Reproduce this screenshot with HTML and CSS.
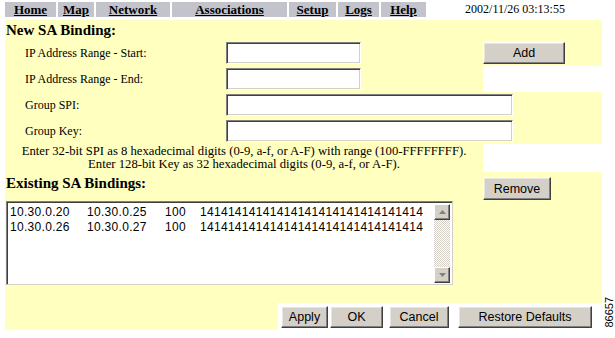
FILE: index.html
```html
<!DOCTYPE html>
<html>
<head>
<meta charset="utf-8">
<link rel="stylesheet" href="styles.css">
</head>
<body>
<div class="nav">
  <a class="tab tab-home">Home</a>
  <a class="tab tab-map">Map</a>
  <a class="tab tab-network">Network</a>
  <a class="tab tab-assoc">Associations</a>
  <a class="tab tab-setup">Setup</a>
  <a class="tab tab-logs">Logs</a>
  <a class="tab tab-help">Help</a>
  <span class="date">2002/11/26 03:13:55</span>
</div>
<div class="page">
  <div class="panel">
    <div class="row head"><h2 class="title">New SA Binding:</h2></div>
    <div class="row field">
      <span class="lbl">IP Address Range - Start:</span>
      <span class="cell"><input class="input short" type="text"></span>
      <span class="cell"><button class="btn btn-add">Add</button></span>
    </div>
    <div class="row field">
      <span class="lbl">IP Address Range - End:</span>
      <span class="cell"><input class="input short" type="text"></span>
      <span class="blank"></span>
    </div>
    <div class="row field">
      <span class="lbl">Group SPI:</span>
      <span class="cell wide"><input class="input long" type="text"></span>
    </div>
    <div class="row field">
      <span class="lbl">Group Key:</span>
      <span class="cell wide"><input class="input long" type="text"></span>
    </div>
    <div class="row hint">
      <p class="hint-text">Enter 32-bit SPI as 8 hexadecimal digits (0-9, a-f, or A-F) with range (100-FFFFFFFF).<br>Enter 128-bit Key as 32 hexadecimal digits (0-9, a-f, or A-F).</p>
      <span class="blank"></span>
    </div>
    <div class="row existing">
      <h2 class="title">Existing SA Bindings:</h2>
      <span class="cell"><button class="btn btn-remove">Remove</button></span>
    </div>
    <div class="row listrow">
      <div class="listbox">
        <div class="items">
          <div class="item"><span class="c1">10.30.0.20</span><span class="c2">10.30.0.25</span><span class="c3">100</span><span>14141414141414141414141414141414</span></div>
          <div class="item"><span class="c1">10.30.0.26</span><span class="c2">10.30.0.27</span><span class="c3">100</span><span>14141414141414141414141414141414</span></div>
        </div>
        <div class="scrollbar">
          <span class="sb-btn"><svg width="7" height="4" viewBox="0 0 7 4"><polygon points="3.5,0 7,4 0,4" fill="#808080"/></svg></span>
          <span class="sb-track"></span>
          <span class="sb-btn"><svg width="7" height="4" viewBox="0 0 7 4"><polygon points="0,0 7,0 3.5,4" fill="#808080"/></svg></span>
        </div>
      </div>
    </div>
    <div class="row spacer"></div>
    <div class="actions">
      <span class="actions-fill"></span>
      <div class="btn-group">
        <button class="btn btn-apply">Apply</button>
        <button class="btn btn-ok">OK</button>
        <button class="btn btn-cancel">Cancel</button>
        <button class="btn btn-restore">Restore Defaults</button>
      </div>
    </div>
  </div>
  <div class="side"><span class="fig">86657</span></div>
</div>
</body>
</html>
```
FILE: styles.css
```css
body {
  margin: 0;
  background: #fff;
  font-family: "Liberation Serif", "Times New Roman", serif;
  color: #000;
}

.nav {
  display: flex;
  gap: 2px;
  margin: 2px 0 3px 5px;
  width: 597px;
  height: 15px;
}
.tab {
  background: #c3c3cb;
  font-weight: bold;
  font-size: 13px;
  line-height: 15px;
  text-align: center;
  text-decoration: underline;
  color: #000;
}
.tab-home { width: 51px; }
.tab-map { width: 36px; }
.tab-network { width: 74px; }
.tab-assoc { width: 115px; }
.tab-setup { width: 47px; }
.tab-logs { width: 41px; }
.tab-help { width: 45px; }
.date {
  flex: 1;
  text-align: center;
  font-size: 12px;
  line-height: 15px;
}

.page {
  display: flex;
  margin-left: 5px;
}
.panel {
  width: 597px;
  flex: none;
}
.row {
  background: #ffffc0;
}
.title {
  margin: 0;
  font-size: 15px;
  font-weight: bold;
  line-height: 20px;
  padding-left: 1px;
}
.head { height: 20px; }

.field {
  display: grid;
  grid-template-columns: 221px 257px 119px;
  height: 26px;
  align-items: center;
}
.lbl {
  padding-left: 20px;
  font-size: 12px;
}
.cell {
  display: flex;
  align-items: center;
}
.wide { grid-column: 2 / 4; }
.blank {
  background: #fff;
  align-self: stretch;
}

.input {
  box-sizing: border-box;
  height: 22px;
  margin: 0;
  padding: 0;
  background: #fff;
  border: 1px solid;
  border-color: #808080 #fff #fff #808080;
  box-shadow: inset 1px 1px #404040, inset -1px -1px #d4d0c8;
  outline: none;
}
.short { width: 135px; }
.long { width: 287px; }

.btn {
  box-sizing: border-box;
  height: 22px;
  margin: 0;
  padding: 0;
  font-family: "Liberation Sans", Arial, sans-serif;
  font-size: 12.5px;
  color: #000;
  background: #d4d0c8;
  border: 1px solid;
  border-color: #fff #404040 #404040 #fff;
  box-shadow: inset -1px -1px #808080, inset 1px 1px #e8e6e1;
}
.btn-add { width: 82px; }
.btn-remove { width: 68px; height: 23px; margin-top: 5px; }

.hint {
  display: grid;
  grid-template-columns: 478px 119px;
  height: 28px;
}
.hint-text {
  margin: 0;
  padding-top: 1px;
  font-size: 12.7px;
  line-height: 13px;
  text-align: center;
}

.existing {
  display: grid;
  grid-template-columns: 478px 119px;
  height: 29px;
  align-items: start;
}
.existing .title { line-height: 20px; padding-top: 1px; }

.listrow { height: 86px; }
.listbox {
  box-sizing: border-box;
  margin-left: 1px;
  width: 447px;
  height: 84px;
  display: flex;
  background: #fff;
  border: 1px solid;
  border-color: #808080 #d4d0c8 #d4d0c8 #808080;
  box-shadow: inset 1px 1px #404040;
}
.items {
  flex: 1;
  padding: 3px 0 0 3px;
  font-family: "Liberation Sans", Arial, sans-serif;
  font-size: 12px;
  line-height: 15px;
  letter-spacing: 0.3px;
}
.item { display: flex; white-space: nowrap; }
.c1 { width: 77px; }
.c2 { width: 78px; }
.c3 { width: 35px; }

.scrollbar {
  width: 16px;
  margin: 2px 2px 1px 0;
  display: flex;
  flex-direction: column;
}
.sb-btn {
  box-sizing: border-box;
  height: 16px;
  display: flex;
  align-items: center;
  justify-content: center;
  background: #d4d0c8;
  border: 1px solid;
  border-color: #fff #404040 #404040 #fff;
  box-shadow: inset -1px -1px #808080;
}
.sb-track {
  flex: 1;
  background: repeating-conic-gradient(#fff 0 25%, #d4d0c8 0 50%) 0 0 / 2px 2px;
}

.spacer { height: 16px; }

.actions {
  display: flex;
  height: 27px;
}
.actions-fill {
  width: 273px;
  background: #ffffc0;
}
.btn-group {
  display: flex;
  align-items: center;
  padding-left: 3px;
}
.btn-apply { width: 47px; }
.btn-ok { width: 53px; margin-left: 2px; }
.btn-cancel { width: 60px; margin-left: 6px; }
.btn-restore { width: 134px; margin-left: 9px; }

.side {
  flex: none;
  width: 13px;
  display: flex;
  align-items: flex-end;
  justify-content: center;
}
.fig {
  writing-mode: vertical-rl;
  transform: rotate(180deg);
  font-family: "Liberation Sans", Arial, sans-serif;
  font-size: 11px;
  line-height: 10px;
  margin-bottom: 2px;
}
```
